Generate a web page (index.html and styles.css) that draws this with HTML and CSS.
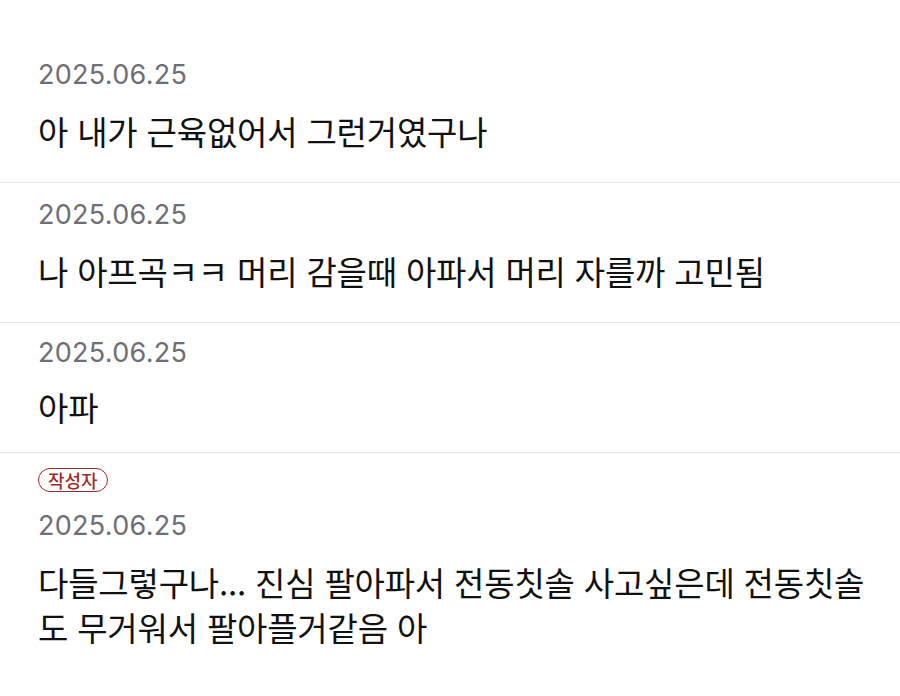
FILE: index.html
```html
<!DOCTYPE html>
<html lang="ko">
<head>
    <meta charset="UTF-8">
    <meta name="viewport" content="width=device-width, initial-scale=1.0">
    <title>댓글</title>
    <link rel="stylesheet" href="styles.css">
</head>
<body>
    <div class="comments">
        <div class="comment">
            <div class="date">2025.06.25</div>
            <p class="text">아 내가 근육없어서 그런거였구나</p>
        </div>
        <div class="comment">
            <div class="date">2025.06.25</div>
            <p class="text">나 아프곡ㅋㅋ 머리 감을때 아파서 머리 자를까 고민됨</p>
        </div>
        <div class="comment compact">
            <div class="date">2025.06.25</div>
            <p class="text">아파</p>
        </div>
        <div class="comment author">
            <span class="badge">작성자</span>
            <div class="date">2025.06.25</div>
            <p class="text">다들그렇구나... 진심 팔아파서 전동칫솔 사고싶은데 전동칫솔도 무거워서 팔아플거같음 아</p>
        </div>
    </div>
</body>
</html>
```

FILE: styles.css
```css
body {
    margin: 0;
    background: #fff;
    font-family: "Noto Sans CJK KR", "Noto Sans", sans-serif;
    color: #111;
}
.comments {
    padding-top: 43px;
}
.comment {
    padding: 16px 20px 28px 38px;
    border-bottom: 1px solid #e4e4e6;
}
.comment:last-child {
    border-bottom: none;
}
.date {
    font-family: Inter, "Liberation Sans", sans-serif;
    font-size: 27px;
    letter-spacing: 0.3px;
    line-height: 32px;
    color: #6e6e74;
}
.text {
    margin: 18px 0 0;
    font-size: 33px;
    letter-spacing: -0.2px;
    line-height: 45px;
    word-break: break-all;
}
.compact {
    padding-top: 14px;
    padding-bottom: 22px;
}
.compact .text {
    margin-top: 16px;
}
.author {
    padding-top: 15px;
}
.badge {
    display: block;
    width: max-content;
    margin-bottom: 18px;
    padding: 0 9px;
    border: 1.5px solid #9c2b2d;
    border-radius: 14px;
    color: #9c2b2d;
    font-size: 18px;
    line-height: 22px;
    font-weight: 500;
}
```
